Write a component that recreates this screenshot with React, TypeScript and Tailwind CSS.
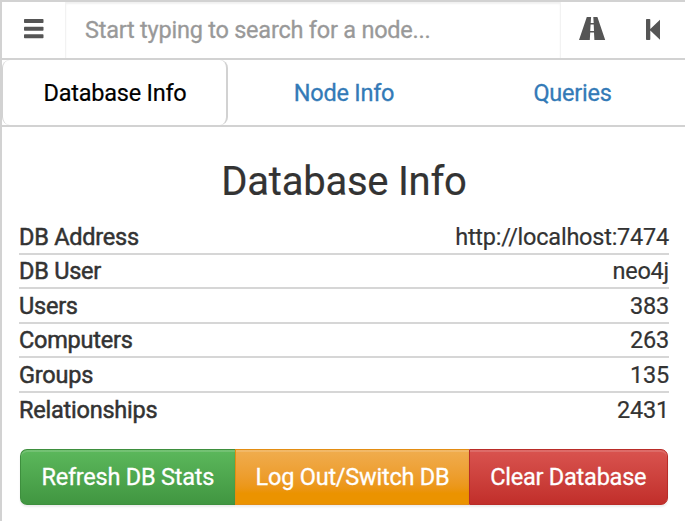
const stats = [
  { label: "DB Address", value: "http://localhost:7474" },
  { label: "DB User", value: "neo4j" },
  { label: "Users", value: "383" },
  { label: "Computers", value: "263" },
  { label: "Groups", value: "135" },
  { label: "Relationships", value: "2431" },
];

function MenuIcon() {
  return (
    <svg width="20" height="20" viewBox="0 0 20 20" fill="#555">
      <rect x="0" y="0" width="19.500" height="4" rx="0.7" />
      <rect x="0" y="7.700" width="19.500" height="4" rx="0.7" />
      <rect x="0" y="15.300" width="19.500" height="4" rx="0.7" />
    </svg>
  );
}

function RoadIcon() {
  return (
    <svg width="27" height="23" viewBox="0 0 27 23" fill="#555">
      <path
        fillRule="evenodd"
        d="M7.800 0h4.300l-.4 6h3L14.300 0h4.100L26.200 23H15.400l-.4-7.500h-3.800L10.800 23H0zM11.600 7.500l-.4 6.500h3.800L14.700 7.500z"
      />
    </svg>
  );
}

function StepBackIcon() {
  return (
    <svg width="15" height="22" viewBox="0 0 15 22" fill="#555">
      <path d="M.8 0h2.700q.8 0 .8.800v9.100L14 .7V20.800L4.300 11.600v8.700q0 .8-.8.800H.8Q0 21.100 0 20.300V.8Q0 0 .8 0z" />
    </svg>
  );
}

export default function App() {
  return (
    <div className="h-[521px] w-[685px] overflow-hidden border-t-2 border-l-2 border-[#d2d2d2] bg-white font-['Roboto',sans-serif] text-[23.5px] tracking-[-0.23px] text-[#333]">
      <div className="flex h-[58px] border-b-2 border-[#d2d2d2]">
        <button className="flex w-[63px] items-start pt-[17px] pl-[21.500px]">
          <MenuIcon />
        </button>
        <div className="flex w-[496px] items-center border-x border-[#f2f2f2] pt-[2px] pl-[19px] text-[#999] shadow-[inset_0_2px_2px_rgba(0,0,0,0.06)] [-webkit-text-stroke:0.300px_#999]">
          Start typing to search for a node...
        </div>
        <button className="flex items-start pt-[15px] pl-[18px]">
          <RoadIcon />
        </button>
        <button className="flex items-start pt-[17px] pl-[40px]">
          <StepBackIcon />
        </button>
      </div>
      <div className="flex h-[67px] border-b-2 border-[#d2d2d2] text-[#337ab7]">
        <div className="flex w-[226px] items-center justify-center rounded-lg border-r-2 border-l border-[#d2d2d2] pt-[3px] pl-[1px] text-black [-webkit-text-stroke:0.200px_#000]">
          Database Info
        </div>
        <div className="flex w-[231px] items-center justify-center pt-[3px] pl-[1px] [-webkit-text-stroke:0.300px_#337ab7]">
          Node Info
        </div>
        <div className="flex w-[226px] items-center justify-center pt-[3px] pl-[1px] [-webkit-text-stroke:0.300px_#337ab7]">
          Queries
        </div>
      </div>
      <div className="pr-[16px] pl-[17px]">
        <h1 className="flex h-[93px] items-end justify-center pb-[13px] text-[40px] leading-[50px] tracking-[-0.250px] [-webkit-text-stroke:0.200px_#333]">
          Database Info
        </h1>
        <dl>
          {stats.map((s) => (
            <div
              key={s.label}
              className="flex h-[34.600px] items-center justify-between border-b-2 border-[#d6d6d6] pt-[0.500px] leading-[32px] last:border-transparent"
            >
              <dt className="[-webkit-text-stroke:0.500px_#333]">{s.label}</dt>
              <dd className="[-webkit-text-stroke:0.200px_#333]">{s.value}</dd>
            </div>
          ))}
        </dl>
        <div className="mt-[21.400px] ml-[1px] flex h-[56px] w-[648px] text-white [text-shadow:0_-1px_1px_rgba(0,0,0,0.25)]">
          <button className="w-[214.500px] rounded-l-[7px] border border-r-0 border-[#3e8f3e] bg-linear-to-b from-[#5cb85c] to-[#419641] pt-[2px] shadow-[inset_0_2px_0_rgba(255,255,255,0.15),0_2px_2px_rgba(0,0,0,0.075)] [-webkit-text-stroke:0.300px_#fff]">
            Refresh DB Stats
          </button>
          <button className="w-[234px] border border-r-0 border-[#e38d13] bg-linear-to-b from-[#f0ad4e] to-[#eb9300] to-80% pt-[2px] pl-[1px] shadow-[inset_0_2px_0_rgba(255,255,255,0.15),0_2px_2px_rgba(0,0,0,0.075)] [-webkit-text-stroke:0.300px_#fff]">
            Log Out/Switch DB
          </button>
          <button className="w-[199.500px] rounded-r-[7px] border border-[#b92c28] bg-linear-to-b from-[#d9534f] to-[#c12e2a] pt-[2px] shadow-[inset_0_2px_0_rgba(255,255,255,0.15),0_2px_2px_rgba(0,0,0,0.075)] [-webkit-text-stroke:0.300px_#fff]">
            Clear Database
          </button>
        </div>
      </div>
    </div>
  );
}
